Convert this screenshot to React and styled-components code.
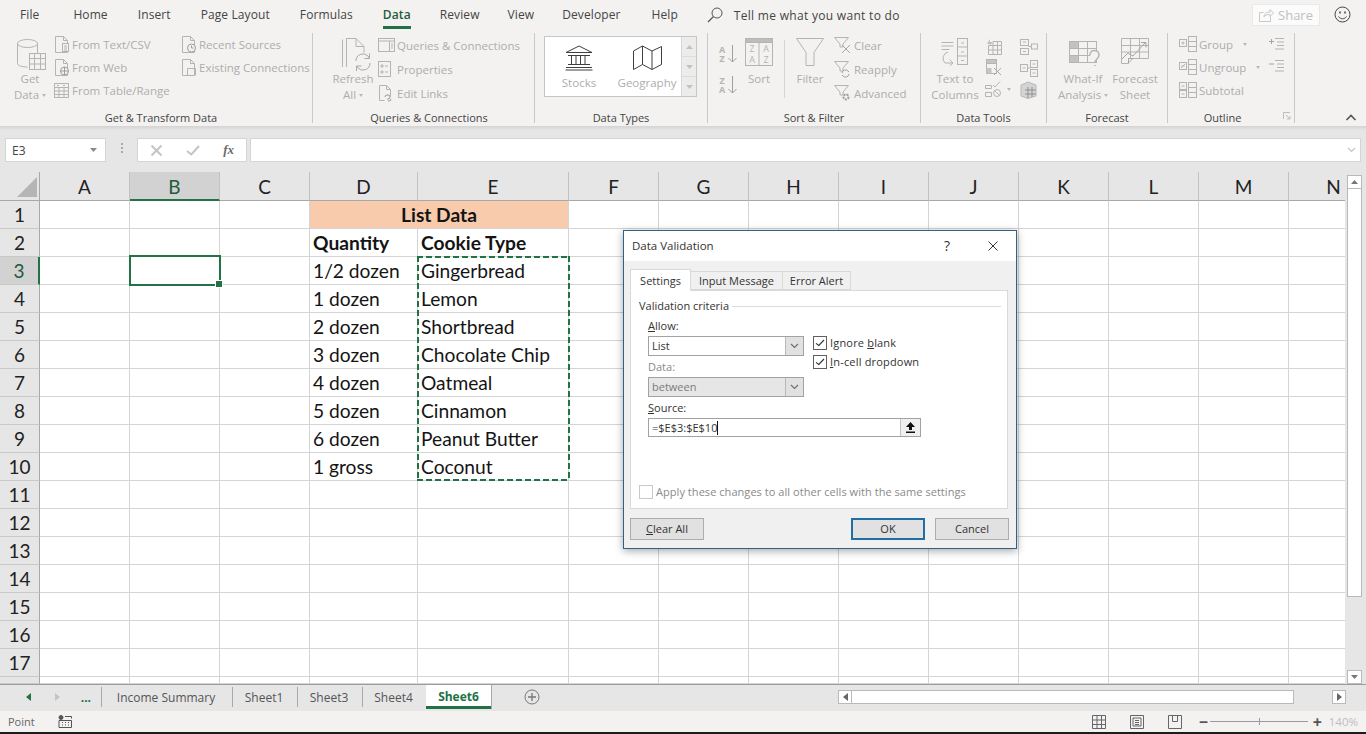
import React from 'react'
import styled, { createGlobalStyle } from 'styled-components'

const GlobalStyle = createGlobalStyle`
  html, body { margin:0; padding:0; background:#e6e6e6; overflow:hidden; }
  body { font-family:"Open Sans","Noto Sans","Liberation Sans",sans-serif; font-size:12px; color:#444; }
  * { box-sizing:border-box; }
`
const GREEN = '#217346'
const DIM = '#adadad'
const LINE = '#b4b4b4'

const Page = styled.div`
  position:relative; width:1366px; height:734px; overflow:hidden;
  display:flex; flex-direction:column; background:#e6e6e6;
`
const Ico = styled.svg.attrs(p => ({ width: p.$w, height: p.$h, viewBox: `0 0 ${p.$w} ${p.$h}` }))`
  flex:none; display:block; fill:none; stroke:${p => p.$tone || LINE}; stroke-width:1;
  margin-left:${p => p.$ml || 0}px;
`

/* ---------- top tabs ---------- */
const TabRow = styled.div`
  height:32px; background:#f3f2f1; display:flex; align-items:flex-start; padding-left:20px; flex:none;
`
const TabItem = styled.div`
  height:28px; line-height:30px; margin-right:${p => p.$mr ?? 30}px; white-space:nowrap; font-size:12px; color:#444;
  letter-spacing:.1px;
  ${p => p.$active && `color:#1f5c3c; font-weight:600; border-bottom:3px solid ${GREEN}; height:29px;`}
`
const SearchHint = styled.div`
  display:flex; align-items:center; gap:11px; height:30px; margin-left:-1px; color:#444; letter-spacing:.3px;
`
const ShareBtn = styled.div`
  position:absolute; left:1252px; top:4px; width:68px; height:22px; background:#fbfbfb; border:1px solid #e9e9e9;
  display:flex; align-items:center; justify-content:center; gap:4px; color:#c0c0c0; font-size:13px;
`
const Smiley = styled.div` position:absolute; left:1334px; top:6px; `

/* ---------- ribbon ---------- */
const Ribbon = styled.div`
  height:94px; background:#f3f2f1; display:flex; align-items:flex-start; padding:1px 0 0 10px; flex:none;
`
const Group = styled.div`
  position:relative; width:${p => p.$w}px; height:90px; flex:none; display:flex; flex-direction:column;
  border-right:1px solid #c9c9c9;
`
const GroupBody = styled.div`
  height:75px; flex:none; display:flex; align-items:flex-start; padding-left:${p => p.$pl || 0}px;
`
const GroupLabel = styled.div`
  height:15px; flex:none; line-height:20px; text-align:center; color:#444; font-size:11px; white-space:nowrap;
  padding-left:${p => p.$pl || 0}px; padding-right:${p => p.$pr || 0}px;
`
const BigBtn = styled.div`
  width:${p => p.$w}px; margin-left:${p => p.$ml || 0}px; flex:none; display:flex; flex-direction:column; align-items:center;
  color:${DIM}; font-size:11.5px; line-height:16px; white-space:nowrap;
`
const IconSlot = styled.div`
  height:38px; padding-top:5px; display:flex; justify-content:center; margin-left:${p => p.$nudge || 0}px;
`
const Caret = styled.span`
  display:inline-block; width:0; height:0; margin-left:${p => p.$ml ?? 3}px; vertical-align:middle;
  border-left:2.5px solid transparent; border-right:2.5px solid transparent; border-top:3px solid ${p => p.$c || '#b8b8b8'};
`
const SmallCol = styled.div`
  margin-left:${p => p.$ml || 0}px; width:${p => (p.$w ? p.$w + 'px' : 'auto')}; flex:none;
  padding-top:${p => p.$pt ?? 0}px; display:flex; flex-direction:column;
`
const SmallRow = styled.div`
  height:${p => p.$h || 23}px; display:flex; align-items:center; gap:${p => p.$gap ?? 2}px; color:${DIM}; white-space:nowrap; font-size:11.5px;
`
const VRule = styled.div`
  width:1px; height:58px; margin:7px ${p => p.$r}px 0 ${p => p.$l}px; background:#d4d4d4; flex:none;
`
const Gallery = styled.div`
  width:153px; height:61px; margin-top:3px; display:flex; background:#fff; border:1px solid #c6c6c6; flex:none;
`
const GalleryItem = styled.div`
  width:${p => p.$w}px; display:flex; flex-direction:column; align-items:center; padding-top:8px; gap:4px; color:${DIM}; font-size:11.5px; line-height:15px;
`
const GalleryScroll = styled.div`
  margin-left:auto; width:15px; display:flex; flex-direction:column; border-left:1px solid #d8d8d8; background:#ececec;
`
const GalleryStep = styled.div`
  flex:1; display:flex; align-items:center; justify-content:center; border-bottom:${p => (p.$last ? 'none' : '1px solid #dcdcdc')};
`
const SortKey = styled.div`
  height:31px; display:flex; align-items:center; gap:1px;
`
const SortLetters = styled.div`
  width:10px; font-size:9px; line-height:9px; font-weight:700; color:#b4b4b4; text-align:center;
  & > span { display:block; height:9px; }
`
const Launcher = styled.div` position:absolute; right:3px; bottom:3px; `
const Collapse = styled.div` position:absolute; left:1345px; top:114px; `

/* ---------- formula bar ---------- */
const RibbonFoot = styled.div`
  height:4px; flex:none; background:linear-gradient(#d3d3d3,#e6e6e6);
`
const FormulaRow = styled.div`
  height:42px; flex:none; display:flex; align-items:flex-start; padding:8px 5px 0; background:#e6e6e6;
`
const NameBox = styled.div`
  width:101px; height:24px; background:#fff; border:1px solid #d4d4d4; display:flex; align-items:center; justify-content:space-between;
  padding:0 8px 0 6px; font-size:12px; color:#444;
`
const Grip = styled.div`
  width:31px; display:flex; flex-direction:column; align-items:center; gap:2px; padding-top:5px; flex:none;
  & > i { width:2px; height:2px; background:#aaa; }
`
const FxBox = styled.div`
  width:110px; height:24px; background:#fff; border:1px solid #d4d4d4; display:flex; align-items:center; justify-content:space-between;
  padding:0 12px; flex:none; margin-right:3px;
`
const FxMark = styled.span`
  font-family:"Liberation Serif",serif; font-style:italic; font-weight:700; font-size:13px; color:#6a6a6a;
`
const FormulaInput = styled.div`
  flex:1; height:24px; background:#fff; border:1px solid #d4d4d4; display:flex; align-items:center; justify-content:flex-end; padding-right:4px;
`

/* ---------- sheet ---------- */
const SheetWrap = styled.div`
  height:512px; flex:none; display:flex; background:#e6e6e6;
`
const Grid = styled.div`
  width:1345px; height:512px; flex:none; display:grid; overflow:hidden; background:#fff;
  grid-template-columns:40px 90px 90px 90px 108px 151px repeat(9,90px);
  grid-template-rows:29px repeat(17,28px) 7px;
  font-family:Lato,"Liberation Sans",sans-serif;
`
const Corner = styled.div`
  grid-column:1; grid-row:1; background:#e6e6e6; border-right:1px solid #a8a8a8; border-bottom:1px solid #a8a8a8; position:relative;
  &::after { content:""; position:absolute; left:17px; top:5px; width:20px; height:20px; background:#b5b5b5; clip-path:polygon(100% 0,100% 100%,0 100%); }
`
const ColHead = styled.div`
  grid-column:${p => p.$c}; grid-row:1; display:flex; align-items:center; justify-content:center; padding-top:1px;
  font-size:19px; color:${p => (p.$on ? '#1f5c3c' : '#222')}; background:${p => (p.$on ? '#d2d2d2' : '#e6e6e6')};
  border-right:1px solid #c2c2c2; border-bottom:${p => (p.$on ? `2px solid ${GREEN}` : '1px solid #a8a8a8')};
`
const RowHead = styled.div`
  grid-column:1; grid-row:${p => p.$r}; display:flex; align-items:center; justify-content:center; overflow:hidden;
  font-size:19px; color:${p => (p.$on ? '#1f5c3c' : '#222')}; background:${p => (p.$on ? '#d2d2d2' : '#e6e6e6')};
  border-right:${p => (p.$on ? `2px solid ${GREEN}` : '1px solid #a8a8a8')}; border-bottom:1px solid #c9c9c9;
`
const Cell = styled.div`
  grid-column:${p => p.$c} / span ${p => p.$span || 1}; grid-row:${p => p.$r};
  border-right:1px solid #d4d4d4; border-bottom:1px solid #d4d4d4; padding:0 3px; display:flex; align-items:center;
  justify-content:${p => (p.$center ? 'center' : 'flex-start')}; font-size:19.2px; color:#141414; white-space:nowrap; overflow:hidden;
  font-weight:${p => (p.$bold ? 700 : 400)}; background:${p => p.$fill || '#fff'};
`
const Selected = styled.div`
  grid-column:3; grid-row:4; margin:-2px -1px -1px -1px; border:2px solid ${GREEN}; position:relative; z-index:2;
  &::after { content:""; position:absolute; right:-4px; bottom:-4px; width:6px; height:6px; background:${GREEN}; border:1px solid #fff; }
`
const Ants = styled.div`
  grid-column:6; grid-row:4 / 12; margin:-1px -1px 0 -1px; z-index:2; pointer-events:none;
  background:
    linear-gradient(90deg,${GREEN} 6px,transparent 6px) left top / 9px 2px repeat-x,
    linear-gradient(90deg,${GREEN} 6px,transparent 6px) left bottom / 9px 2px repeat-x,
    linear-gradient(${GREEN} 6px,transparent 6px) left top / 2px 9px repeat-y,
    linear-gradient(${GREEN} 6px,transparent 6px) right top / 2px 9px repeat-y;
`
const VScroll = styled.div`
  flex:1; display:flex; flex-direction:column; padding:3px 3px 0 2px; background:#e6e6e6;
`
const ScrollBtn = styled.div`
  width:15px; height:14px; flex:none; background:#fff; border:1px solid #b9b9b9; display:flex; align-items:center; justify-content:center;
`
const VThumb = styled.div`
  width:15px; height:408px; flex:none; background:#fff; border:1px solid #b9b9b9; border-top:none;
`
const VTrack = styled.div` flex:1; `

/* ---------- sheet tabs ---------- */
const SheetBar = styled.div`
  height:27px; flex:none; display:flex; align-items:flex-start; background:#e6e6e6; border-top:1px solid #9c9c9c;
`
const Nav = styled.div`
  width:${p => p.$w}px; height:24px; flex:none; display:flex; align-items:center; color:${GREEN}; font-weight:700;
  justify-content:${p => (p.$end ? 'flex-end' : 'center')}; padding-right:${p => (p.$end ? 10 : 0)}px;
`
const SheetTab = styled.div`
  width:${p => p.$w}px; height:20px; margin-top:2px; padding-right:2px; flex:none; display:flex; align-items:center; justify-content:center; font-size:12px; color:#555;
  border-left:1px solid #a8a8a8;
  ${p => p.$active && `
    height:24px; margin-top:0; padding:1px 0 0; background:#fff; color:${GREEN}; font-weight:700; border-left:none; border-bottom:3px solid ${GREEN};
    box-shadow:1px 0 0 #a8a8a8;
  `}
`
const AddSheet = styled.div` margin:4px 0 0 33px; width:16px; flex:none; `
const HScroll = styled.div`
  margin:5px 0 0 298px; display:flex; align-items:stretch; height:14px; flex:none;
`
const HBtn = styled(ScrollBtn)` width:14px; `
const HThumb = styled.div` width:442px; background:#fff; border:1px solid #b9b9b9; border-left:none; `
const HTrack = styled.div` width:38px; `

/* ---------- status ---------- */
const StatusBar = styled.div`
  height:21px; flex:none; background:#f3f2f1; display:flex; align-items:center; padding-left:8px; color:#666; font-size:11px;
`
const StatusRight = styled.div`
  margin-left:auto; display:flex; align-items:center; padding-right:8px;
`
const ViewBtn = styled.div` margin-right:${p => p.$mr}px; display:flex; `
const Zoom = styled.div`
  display:flex; align-items:center; color:#bdbdbd; font-size:11.5px; gap:5px;
`
const ZoomTrack = styled.div`
  position:relative; width:98px; height:1px; background:#9a9a9a;
  &::after { content:""; position:absolute; left:49px; top:-3px; width:1px; height:7px; background:#9a9a9a; }
`
const ZoomMark = styled.span`
  font-size:16px; line-height:16px; font-weight:700; color:#555; width:${p => p.$w || 9}px; text-align:center;
`
const Percent = styled.span` margin-left:2px; `
const BlackEdge = styled.div` height:2px; flex:none; background:#1c1c1c; `

/* ---------- dialog ---------- */
const Dialog = styled.div`
  position:absolute; left:623px; top:230px; width:394px; height:319px; z-index:5; background:#f0f0f0;
  border:1px solid #2e6288; box-shadow:0 2px 8px rgba(0,0,0,.35); display:flex; flex-direction:column;
  font-size:11px; color:#333;
`
const Lift = styled.span` margin-bottom:2px; white-space:nowrap; `
const TitleBar = styled.div`
  height:30px; flex:none; background:#fff; display:flex; align-items:center; padding-left:8px; font-size:11.5px; color:#333;
`
const Help = styled.span` margin-left:auto; font-size:14px; margin-right:37px; margin-bottom:2px; `
const CloseX = styled.div` margin-right:17px; display:flex; `
const DlgBody = styled.div`
  flex:1; display:flex; flex-direction:column; padding:8px 7px 0 6px;
`
const DlgTabs = styled.div` display:flex; height:21px; align-items:flex-end; flex:none; `
const DlgTab = styled.div`
  width:${p => p.$w}px; height:${p => (p.$active ? 22 : 19)}px; display:flex; align-items:center; justify-content:center; flex:none;
  background:${p => (p.$active ? '#fff' : '#f0f0f0')}; border:1px solid #d9d9d9; margin-left:${p => (p.$active ? 0 : -1)}px;
  border-bottom:${p => (p.$active ? '1px solid #fff' : '1px solid #d9d9d9')}; position:relative; z-index:${p => (p.$active ? 2 : 1)};
  margin-bottom:${p => (p.$active ? -1 : 0)}px;
`
const Panel = styled.div`
  width:378px; height:219px; flex:none; background:#fff; border:1px solid #d9d9d9; display:flex; flex-direction:column; padding:8px 0 9px;
`
const Legend = styled.div`
  display:flex; align-items:center; gap:3px; padding:0 6px 0 8px; height:14px; flex:none;
  &::after { content:""; flex:1; height:1px; background:#dcdcdc; }
`
const Fields = styled.div` padding-left:17px; display:flex; flex-direction:column; flex:1; `
const FieldLabel = styled.div`
  height:14px; line-height:14px; margin-top:${p => p.$mt}px; color:${p => (p.$off ? '#8a8a8a' : '#333')}; flex:none;
`
const FieldRow = styled.div` display:flex; height:20px; margin-top:3px; gap:9px; flex:none; `
const Select = styled.div`
  width:156px; height:20px; flex:none; display:flex; align-items:center; justify-content:space-between; padding-left:3px;
  border:1px solid #a2a2a2; background:${p => (p.$off ? '#e6e6e6' : '#fff')}; color:${p => (p.$off ? '#7c7c7c' : '#333')};
`
const SelectBtn = styled.div`
  width:18px; height:18px; background:#e1e1e1; border-left:1px solid #b8b8b8; display:flex; align-items:center; justify-content:center;
`
const Checks = styled.div` display:flex; flex-direction:column; gap:5px; `
const CheckRow = styled.div`
  display:flex; align-items:center; gap:3px; height:14px; color:${p => (p.$off ? '#8a8a8a' : '#333')}; white-space:nowrap;
  letter-spacing:${p => (p.$off ? '.05px' : '.18px')};
`
const CheckBox = styled.div`
  width:14px; height:14px; flex:none; background:#fff; border:1px solid ${p => (p.$off ? '#c9c9c9' : '#5f5f5f')}; display:flex; align-items:center; justify-content:center;
`
const SourceBox = styled.div`
  width:273px; height:19px; margin-top:3px; flex:none; display:flex; align-items:center; padding-left:3px; border:1px solid #a2a2a2; background:#fff;
`
const CaretLine = styled.span` width:1px; height:14px; background:#111; flex:none; `
const RefBtn = styled.div`
  margin-left:auto; width:20px; height:17px; background:#f0f0f0; border-left:1px solid #c2c2c2; display:flex; align-items:center; justify-content:center;
`
const ApplyWrap = styled.div` margin-top:auto; padding-left:8px; flex:none; `
const BtnRow = styled.div` display:flex; margin-top:9px; gap:10px; flex:none; `
const DlgBtn = styled.div`
  width:74px; height:22px; flex:none; display:flex; align-items:center; justify-content:center; background:#e1e1e1; color:#333;
  border:${p => (p.$primary ? '2px solid #1f6ea5' : '1px solid #adadad')};
  margin-left:${p => (p.$push ? 'auto' : 0)};
`

/* ---------- icons ---------- */
const fold = 'M1.5.5h8l4 4v12h-12zM9.5.5v4h4'
const GetDataIcon = () => (
  <Ico $w={32} $h={34}>
    <ellipse cx="11.5" cy="5.5" rx="10" ry="4" />
    <path d="M1.5 5.5v20c0 2 4 3.5 10 3.5M21.5 5.5v10" />
    <rect x="13.5" y="15.5" width="16" height="16" fill="#f3f2f1" />
    <path d="M13.5 20.5h16M13.5 26h16M18.5 15.5v16M24.5 15.5v16" />
  </Ico>
)
const DocText = () => (
  <Ico $w={16} $h={17}><path d={fold} /><rect x="8.5" y="7.5" width="6" height="8" fill="#f3f2f1" /><path d="M10 10h3M10 12h3M10 14h3" /></Ico>
)
const DocWeb = () => (
  <Ico $w={16} $h={17}><path d={fold} /><circle cx="10.5" cy="12" r="4" fill="#f3f2f1" stroke="#9e9e9e" /><path d="M6.5 12h8M10.5 8v8" stroke="#9e9e9e" /></Ico>
)
const TableIco = () => (
  <Ico $w={16} $h={16}><rect x=".5" y=".5" width="14" height="14" /><path d="M.5 4.5h14M.5 8h14M.5 11.5h14M5 4.5v10M10 4.5v10" /><path d="M3 2.5h2M9 2.5h2" /></Ico>
)
const DocClock = () => (
  <Ico $w={16} $h={17}><path d={fold} /><circle cx="10.5" cy="12" r="4" fill="#f3f2f1" stroke="#9e9e9e" /><path d="M10.5 9.5V12h2" stroke="#9e9e9e" /></Ico>
)
const DocPair = () => (
  <Ico $w={16} $h={17}><path d={fold} /><path d="M6.5 16.5v-7h8v7" /></Ico>
)
const RefreshIcon = () => (
  <Ico $w={31} $h={33}>
    <path d="M.5 29V1.5M4.5 29V.5H14l8 8v6M14 .5v8h8" />
    <path d="M14 23a7 7 0 0 1 12-5l1.5 2M28 25a7 7 0 0 1-12 5l-1.5-2M27.5 15.5v5h-5M14.5 33v-5h5" stroke="#a8a8a8" />
  </Ico>
)
const QueriesIco = () => (
  <Ico $w={18} $h={15}><rect x=".5" y=".5" width="16" height="13" /><path d="M.5 3h16M11.5 3v10.5M13 6h2M13 8h2M13 10h2" /></Ico>
)
const PropsIco = () => (
  <Ico $w={14} $h={17}><rect x=".5" y=".5" width="12" height="15" /><path d="M3 4h2v2H3zM3 10h2v2H3zM7 5h3M7 11h3" /></Ico>
)
const LinksIco = () => (
  <Ico $w={15} $h={17}><path d="M1.5.5h7l4 4v7M8.5.5v4h4M1.5.5v15h5" /><path d="M7 12a2 2 0 0 1 2-2h1a2 2 0 0 1 0 4H9M13 14a2 2 0 0 1-2 2h-1" stroke="#999" /></Ico>
)
const BankIcon = () => (
  <Ico $w={28} $h={26} $tone="#3f3f3f">
    <path d="M1 7.5 14 1l13 6.5zM3 10.5h22M3 19.5h22M1 22.5h26M.5 25h27" />
    <path d="M6.5 10.5v9M11 10.5v9M15.5 10.5v9M20 10.5v9" />
  </Ico>
)
const MapIcon = () => (
  <Ico $w={29} $h={26} $tone="#3f3f3f">
    <path d="M.5 6 9.5 1l9.5 5 9.5-4.5V19.5L19 24.5 9.5 19.5.5 24.5zM9.5 1v18.5M19 6v18.5" />
  </Ico>
)
const Tri = ({ down, c = '#b4b4b4', w = 7, h = 4 }) => (
  <Ico $w={w} $h={h} $tone="none"><path fill={c} d={down ? `M0 0h${w}L${w / 2} ${h}z` : `M0 ${h}h${w}L${w / 2} 0z`} /></Ico>
)
const DownArrow = () => (
  <Ico $w={9} $h={18} $tone="#9e9e9e"><path d="M4.5 0v17M.5 13l4 4 4-4" /></Ico>
)
const SortGlyph = styled.text`
  font-size:9px; font-family:"Open Sans",sans-serif; fill:#b4b4b4; stroke:none; text-anchor:middle;
`
const SortIcon = () => (
  <Ico $w={28} $h={29}>
    <rect x=".5" y=".5" width="27" height="27" />
    <rect x=".5" y=".5" width="27" height="4" fill="#bdbdbd" />
    <path d="M14 4.5v23" />
    <SortGlyph x="7" y="14">Z</SortGlyph>
    <SortGlyph x="21" y="14">A</SortGlyph>
    <SortGlyph x="7" y="25">A</SortGlyph>
    <SortGlyph x="21" y="25">Z</SortGlyph>
  </Ico>
)
const FunnelBig = () => (
  <Ico $w={28} $h={28}><path d="M.5.5h27L18 14.5v13h-8v-13zM3 .5h22" /></Ico>
)
const funnelSmall = 'M.5.5h14L9 7v3H6V7z'
const FunnelClear = () => (
  <Ico $w={18} $h={17}><path d={funnelSmall} /><path d="M8 8l8 8M16 8l-8 8" stroke="#a8a8a8" /></Ico>
)
const FunnelReapply = () => (
  <Ico $w={18} $h={17}><path d={funnelSmall} /><path d="M8 12a3.5 3.5 0 0 1 6-2l1 1M15 13a3.5 3.5 0 0 1-6 2l-1-1" stroke="#a0a0a0" /></Ico>
)
const FunnelAdv = () => (
  <Ico $w={18} $h={17}><path d={funnelSmall} /><circle cx="12" cy="12" r="2.5" stroke="#a0a0a0" strokeWidth="2" strokeDasharray="2 1" /></Ico>
)
const TextColsIcon = () => (
  <Ico $w={28} $h={28}>
    <path d="M.5 4.5h12M.5 8h12M.5 11.5h8" />
    <rect x="16.5" y=".5" width="10" height="26" />
    <path d="M16.5 9h10M16.5 18h10M20 5h3M20 14h3M20 22.5h3" />
    <path d="M7 14a6.5 6.5 0 0 0-3 11h8M8.5 21.5l3.5 3.5-3.5 3" />
  </Ico>
)
const FlashIco = () => (
  <Ico $w={17} $h={16}><path d="M3.5 6.5h13v9h-13zM3.5 11h13M8 2.5v13M12.5 2.5v13M8 2.5h8.5v4" /><path d="M5 0 2 5h3L3 9l5-6H5z" fill="#c0c0c0" stroke="none" /></Ico>
)
const DupIco = () => (
  <Ico $w={17} $h={18}><rect x="1.5" y=".5" width="10" height="14" /><rect x="1.5" y=".5" width="10" height="4" fill="#c4c4c4" /><rect x="1.5" y="9" width="5" height="5.5" fill="#c4c4c4" stroke="none" /><path d="M9 9l7 7M16 9l-7 7" stroke="#a8a8a8" /></Ico>
)
const ValidateIco = () => (
  <Ico $w={17} $h={17}><path d="M.5 4.5h6v3h-6zM.5 11.5h6v4h-6zM8 4l2 2 5-5.5" /><circle cx="12" cy="12" r="3.5" /><path d="M9.5 9.5l5 5" /></Ico>
)
const ConsolIco = () => (
  <Ico $w={18} $h={16}><rect x=".5" y=".5" width="8" height="6" /><rect x=".5" y="9.5" width="8" height="6" /><rect x="11.5" y="5" width="6" height="5" /><path d="M8.5 7.5h3M3 3h3M3 12.5h3" /></Ico>
)
const RelIco = () => (
  <Ico $w={18} $h={17}><rect x=".5" y="4.5" width="7" height="7" /><rect x="10.5" y=".5" width="7" height="7" /><rect x="10.5" y="9.5" width="7" height="7" /><path d="M7.5 8h3M2.5 8h3M12.5 4h3M12.5 13h3" /></Ico>
)
const ModelIco = () => (
  <Ico $w={17} $h={18} $tone="#b9b9b9"><path d="M1 4 8 1l8 3v11l-8 2.5L1 15z" fill="#d4d4d4" /><path d="M8 6v11M12 6v10M5 9h11M5 13h11" stroke="#8f8f8f" /></Ico>
)
const WhatIfIcon = () => (
  <Ico $w={32} $h={28}>
    <rect x=".5" y="3.5" width="27" height="21" fill="#f3f2f1" />
    <rect x=".5" y="3.5" width="9" height="7" fill="#c2c2c2" />
    <rect x=".5" y="17.5" width="9" height="7" fill="#c2c2c2" />
    <path d="M.5 10.5h27M.5 17.5h27M9.5 3.5v21M18.5 3.5v21" />
    <path d="M21 17c0-6 9-6 9 0 0 4-4 3.5-4 8M26 27v1" strokeWidth="1.5" fill="#f3f2f1" />
  </Ico>
)
const ForecastIcon = () => (
  <Ico $w={29} $h={27}>
    <path d="M.5 .5h27v20H12l-5 5H.5z" />
    <path d="M.5 7.5h27M.5 14h27M9.5.5v20M18.5.5v20" />
    <path d="M1 21l6-6 5 3 12-13M20 4.5h5v5M7.5 25.5V20.5h5" stroke="#a4a4a4" />
  </Ico>
)
const OutlineIco = ({ kind }) => (
  <Ico $w={18} $h={17}>
    <rect x=".5" y="3.5" width="7" height="7" />
    <rect x="9.5" y=".5" width="8" height="15" />
    <path d="M9.5 5.5h8M9.5 10.5h8" />
    {kind === 'group' && <path d="M2.5 7h3M4 5.5v3" />}
    {kind === 'ungroup' && <path d="M2.5 7h3M2 9l4-4" />}
  </Ico>
)
const SubtotalIco = () => (
  <Ico $w={18} $h={17}>
    <rect x=".5" y=".5" width="7" height="7" /><rect x=".5" y="8.5" width="7" height="7" />
    <rect x="9.5" y=".5" width="8" height="15" /><path d="M9.5 5.5h8M9.5 10.5h8M2.5 4h3M2.5 12h3" />
  </Ico>
)
const OutlineRows = ({ plus }) => (
  <Ico $w={17} $h={14}>
    <path d="M7 1.5h9M9 5h7M9 8.5h7M7 12h9" />
    <path d={plus ? 'M1 4.5h5M3.5 2v5' : 'M1 5h5'} stroke="#a4a4a4" />
  </Ico>
)
const Cross = ({ s = 13, c = '#c4c4c4', sw = 2 }) => (
  <Ico $w={s} $h={s} $tone={c}><path d={`M1.5 1.5 ${s - 1.5} ${s - 1.5}M${s - 1.5} 1.5 1.5 ${s - 1.5}`} strokeWidth={sw} /></Ico>
)
const Tick = ({ w = 14, h = 11, c = '#c4c4c4', sw = 2 }) => (
  <Ico $w={w} $h={h} $tone={c}><path d={`M1 ${h * 0.55} ${w * 0.38} ${h - 1.5} ${w - 1} 1`} strokeWidth={sw} /></Ico>
)
const Chev = ({ c = '#6f6f6f' }) => (
  <Ico $w={9} $h={6} $tone={c}><path d="M1 1l3.5 3.5L8 1" strokeWidth="1.2" /></Ico>
)

const leftTabs = [['File', 34], ['Home'], ['Insert'], ['Page Layout'], ['Formulas'], ['Data', 29, true], ['Review', 28], ['View', 28], ['Developer', 31], ['Help', 30]]
const colNames = ['A','B','C','D','E','F','G','H','I','J','K','L','M','N']
const sheetRows = {
  2: ['Quantity', 'Cookie Type'],
  3: ['1/2 dozen', 'Gingerbread'],
  4: ['1 dozen', 'Lemon'],
  5: ['2 dozen', 'Shortbread'],
  6: ['3 dozen', 'Chocolate Chip'],
  7: ['4 dozen', 'Oatmeal'],
  8: ['5 dozen', 'Cinnamon'],
  9: ['6 dozen', 'Peanut Butter'],
  10: ['1 gross', 'Coconut'],
}

function Sheet() {
  const out = []
  for (let r = 1; r <= 18; r++) {
    out.push(<RowHead key={'h' + r} $r={r + 1} $on={r === 3}>{r < 18 ? r : null}</RowHead>)
    for (let c = 0; c < 14; c++) {
      const gridCol = c + 2
      const key = r + '-' + c
      if (r === 1 && c === 3) {
        out.push(<Cell key={key} $c={gridCol} $r={2} $span={2} $center $bold $fill="#f8cbad">List Data</Cell>)
      } else if (r === 1 && c === 4) {
        continue
      } else {
        const row = sheetRows[r]
        const text = row && (c === 3 ? row[0] : c === 4 ? row[1] : null)
        out.push(<Cell key={key} $c={gridCol} $r={r + 1} $bold={r === 2}>{text}</Cell>)
      }
    }
  }
  return (
    <Grid>
      <Corner />
      {colNames.map((n, i) => <ColHead key={n} $c={i + 2} $on={n === 'B'}>{n}</ColHead>)}
      {out}
      <Selected />
      <Ants />
    </Grid>
  )
}

function RibbonBar() {
  return (
    <Ribbon>
      <Group $w={303}>
        <GroupBody $pl={3}>
          <BigBtn $w={34}>
            <IconSlot $nudge={3}><GetDataIcon /></IconSlot>
            <div>Get</div><div>Data<Caret /></div>
          </BigBtn>
          <SmallCol $ml={7} $w={127}>
            <SmallRow><DocText />From Text/CSV</SmallRow>
            <SmallRow><DocWeb />From Web</SmallRow>
            <SmallRow><TableIco />From Table/Range</SmallRow>
          </SmallCol>
          <SmallCol>
            <SmallRow><DocClock />Recent Sources</SmallRow>
            <SmallRow><DocPair />Existing Connections</SmallRow>
          </SmallCol>
        </GroupBody>
        <GroupLabel>Get &amp; Transform Data</GroupLabel>
      </Group>
      <Group $w={222}>
        <GroupBody $pl={20}>
          <BigBtn $w={40}>
            <IconSlot $nudge={9}><RefreshIcon /></IconSlot>
            <div>Refresh</div><div>All<Caret /></div>
          </BigBtn>
          <SmallCol $ml={5}>
            <SmallRow $h={24} $gap={1}><QueriesIco />Queries &amp; Connections</SmallRow>
            <SmallRow $h={24} $gap={5}><PropsIco />Properties</SmallRow>
            <SmallRow $h={24} $gap={4}><LinksIco />Edit Links</SmallRow>
          </SmallCol>
        </GroupBody>
        <GroupLabel $pl={11}>Queries &amp; Connections</GroupLabel>
      </Group>
      <Group $w={173}>
        <GroupBody $pl={9}>
          <Gallery>
            <GalleryItem $w={68}><BankIcon />Stocks</GalleryItem>
            <GalleryItem $w={68}><MapIcon />Geography</GalleryItem>
            <GalleryScroll>
              <GalleryStep><Tri c="#c2c2c2" /></GalleryStep>
              <GalleryStep><Tri down c="#c2c2c2" /></GalleryStep>
              <GalleryStep $last><Tri down c="#c2c2c2" /></GalleryStep>
            </GalleryScroll>
          </Gallery>
        </GroupBody>
        <GroupLabel>Data Types</GroupLabel>
      </Group>
      <Group $w={213}>
        <GroupBody $pl={9}>
          <SmallCol $pt={5}>
            <SortKey><SortLetters><span>A</span><span>Z</span></SortLetters><DownArrow /></SortKey>
            <SortKey><SortLetters><span>Z</span><span>A</span></SortLetters><DownArrow /></SortKey>
          </SmallCol>
          <BigBtn $w={30} $ml={7}>
            <IconSlot><SortIcon /></IconSlot>
            <div>Sort</div>
          </BigBtn>
          <VRule $l={10} $r={10} />
          <BigBtn $w={30}>
            <IconSlot><FunnelBig /></IconSlot>
            <div>Filter</div>
          </BigBtn>
          <SmallCol $ml={9}>
            <SmallRow $h={24}><FunnelClear />Clear</SmallRow>
            <SmallRow $h={24}><FunnelReapply />Reapply</SmallRow>
            <SmallRow $h={24}><FunnelAdv />Advanced</SmallRow>
          </SmallCol>
        </GroupBody>
        <GroupLabel>Sort &amp; Filter</GroupLabel>
      </Group>
      <Group $w={126}>
        <GroupBody $pl={9}>
          <BigBtn $w={50}>
            <IconSlot><TextColsIcon /></IconSlot>
            <div>Text to</div><div>Columns</div>
          </BigBtn>
          <SmallCol $ml={5} $pt={3} $w={35}>
            <SmallRow $h={21}><FlashIco /></SmallRow>
            <SmallRow $h={22}><DupIco /></SmallRow>
            <SmallRow $h={21} $gap={5}><ValidateIco /><Caret $ml={0} /></SmallRow>
          </SmallCol>
          <SmallCol $pt={3}>
            <SmallRow $h={21}><ConsolIco /></SmallRow>
            <SmallRow $h={22}><RelIco /></SmallRow>
            <SmallRow $h={21}><ModelIco /></SmallRow>
          </SmallCol>
        </GroupBody>
        <GroupLabel>Data Tools</GroupLabel>
      </Group>
      <Group $w={121}>
        <GroupBody $pl={9}>
          <BigBtn $w={54}>
            <IconSlot $nudge={4}><WhatIfIcon /></IconSlot>
            <div>What-If</div><div>Analysis<Caret /></div>
          </BigBtn>
          <BigBtn $w={50}>
            <IconSlot><ForecastIcon /></IconSlot>
            <div>Forecast</div><div>Sheet</div>
          </BigBtn>
        </GroupBody>
        <GroupLabel>Forecast</GroupLabel>
      </Group>
      <Group $w={127}>
        <GroupBody $pl={11}>
          <SmallCol $w={89}>
            <SmallRow><OutlineIco kind="group" />Group<Caret $ml={8} /></SmallRow>
            <SmallRow><OutlineIco kind="ungroup" />Ungroup<Caret $ml={8} /></SmallRow>
            <SmallRow><SubtotalIco />Subtotal</SmallRow>
          </SmallCol>
          <SmallCol>
            <SmallRow $h={22}><OutlineRows plus /></SmallRow>
            <SmallRow $h={22}><OutlineRows /></SmallRow>
          </SmallCol>
        </GroupBody>
        <GroupLabel $pr={17}>Outline</GroupLabel>
        <Launcher>
          <Ico $w={8} $h={8} $tone="#bdbdbd"><path d="M.5 7V.5H7M3 3l4 4M7 4v3H4" /></Ico>
        </Launcher>
      </Group>
    </Ribbon>
  )
}

export default function App() {
  return (
    <Page>
      <GlobalStyle />
      <TabRow>
        {leftTabs.map(([name, mr, active]) => (
          <TabItem key={name} $mr={mr} $active={active}>{name}</TabItem>
        ))}
        <SearchHint>
          <Ico $w={16} $h={16} $tone="#555">
            <circle cx="10" cy="6" r="5" />
            <path d="M6.5 9.5 1 15" strokeWidth="1.3" />
          </Ico>
          Tell me what you want to do
        </SearchHint>
      </TabRow>
      <ShareBtn>
        <Ico $w={15} $h={14} $tone="#c8c8c8"><path d="M.5 4.5h4M.5 4.5v9h11v-5M5 9c0-4 3-5 6-5V1.5l3.5 3.5L11 8.5V6.5C8 6.5 6 7 5 9z" /></Ico>
        Share
      </ShareBtn>
      <Smiley>
        <Ico $w={17} $h={17} $tone="#444">
          <circle cx="8.5" cy="8.5" r="7.5" />
          <path d="M4.5 10.5c2 3 6 3 8 0" />
          <path d="M6 5.5v2M11 5.5v2" strokeWidth="1.5" />
        </Ico>
      </Smiley>
      <RibbonBar />
      <Collapse>
        <Ico $w={12} $h={7} $tone="#555"><path d="M1.5 6 6 1.5 10.5 6" strokeWidth="1.6" /></Ico>
      </Collapse>
      <RibbonFoot />
      <FormulaRow>
        <NameBox>E3<Tri down c="#8a8a8a" /></NameBox>
        <Grip><i /><i /><i /></Grip>
        <FxBox>
          <Cross />
          <Tick />
          <FxMark>fx</FxMark>
        </FxBox>
        <FormulaInput><Chev c="#c4c4c4" /></FormulaInput>
      </FormulaRow>
      <SheetWrap>
        <Sheet />
        <VScroll>
          <ScrollBtn><Tri c="#777" /></ScrollBtn>
          <VThumb />
          <VTrack />
          <ScrollBtn><Tri down c="#777" /></ScrollBtn>
        </VScroll>
      </SheetWrap>
      <SheetBar>
        <Nav $w={58}><Ico $w={6} $h={8} $tone="none"><path fill={GREEN} d="M5 0v8L0 4z" /></Ico></Nav>
        <Nav $w={0}><Ico $w={6} $h={8} $tone="none"><path fill="#c4c4c4" d="M0 0v8l5-4z" /></Ico></Nav>
        <Nav $w={43} $end>...</Nav>
        <SheetTab $w={131}>Income Summary</SheetTab>
        <SheetTab $w={65}>Sheet1</SheetTab>
        <SheetTab $w={65}>Sheet3</SheetTab>
        <SheetTab $w={64}>Sheet4</SheetTab>
        <SheetTab $w={65} $active>Sheet6</SheetTab>
        <AddSheet>
          <Ico $w={16} $h={16} $tone="#777"><circle cx="8" cy="8" r="7" /><path d="M8 4v8M4 8h8" strokeWidth="1.3" /></Ico>
        </AddSheet>
        <HScroll>
          <HBtn><Ico $w={5} $h={8} $tone="none"><path fill="#666" d="M5 0v8L0 4z" /></Ico></HBtn>
          <HThumb />
          <HTrack />
          <HBtn><Ico $w={5} $h={8} $tone="none"><path fill="#666" d="M0 0v8l5-4z" /></Ico></HBtn>
        </HScroll>
      </SheetBar>
      <StatusBar>
        Point
        <Ico $w={14} $h={13} $tone="#555" $ml={23}>
          <circle cx="3" cy="2.5" r="2" fill="#555" />
          <path d="M7 1.5h6.5v2M1 5.5h12.5v7H1zM4 7.5h1M7 7.5h1M10 7.5h1M4 10h1M7 10h1M10 10h1" />
        </Ico>
        <StatusRight>
          <ViewBtn $mr={24}>
            <Ico $w={14} $h={14} $tone="#666"><path d="M.5.5h13v13H.5zM5 .5v13M9.5 .5v13M.5 5h13M.5 9.5h13" /></Ico>
          </ViewBtn>
          <ViewBtn $mr={24}>
            <Ico $w={14} $h={14} $tone="#666"><path d="M.5.5h13v13H.5zM3 3h8v8H3zM5 5.5h4M5 7.5h4M5 9.5h4" /></Ico>
          </ViewBtn>
          <ViewBtn $mr={17}>
            <Ico $w={14} $h={14} $tone="#666"><path d="M.5.5h13v13H.5zM4.5 .5v6h5v-6" /></Ico>
          </ViewBtn>
          <Zoom>
            <ZoomMark $w={6}>−</ZoomMark>
            <ZoomTrack />
            <ZoomMark>+</ZoomMark>
            <Percent>140%</Percent>
          </Zoom>
        </StatusRight>
      </StatusBar>
      <BlackEdge />

      <Dialog>
        <TitleBar>
          <Lift>Data Validation</Lift>
          <Help>?</Help>
          <CloseX><Cross s={12} c="#333" sw={1} /></CloseX>
        </TitleBar>
        <DlgBody>
          <DlgTabs>
            <DlgTab $w={61} $active>Settings</DlgTab>
            <DlgTab $w={93}>Input Message</DlgTab>
            <DlgTab $w={69}>Error Alert</DlgTab>
          </DlgTabs>
          <Panel>
            <Legend><Lift>Validation criteria</Lift></Legend>
            <Fields>
              <FieldLabel $mt={6}><u>A</u>llow:</FieldLabel>
              <FieldRow>
                <Select><Lift>List</Lift><SelectBtn><Chev /></SelectBtn></Select>
                <Checks>
                  <CheckRow><CheckBox><Tick w={10} h={8} c="#333" sw={1.1} /></CheckBox><Lift>Ignore <u>b</u>lank</Lift></CheckRow>
                  <CheckRow><CheckBox><Tick w={10} h={8} c="#333" sw={1.1} /></CheckBox><Lift><u>I</u>n-cell dropdown</Lift></CheckRow>
                </Checks>
              </FieldRow>
              <FieldLabel $mt={4} $off>Data:</FieldLabel>
              <FieldRow>
                <Select $off><Lift>between</Lift><SelectBtn><Chev /></SelectBtn></Select>
              </FieldRow>
              <FieldLabel $mt={4}><u>S</u>ource:</FieldLabel>
              <SourceBox>
                =$E$3:$E$10<CaretLine />
                <RefBtn>
                  <Ico $w={9} $h={11} $tone="none"><path fill="#111" d="M4.5 0 9 5H6v3H3V5H0zM0 9.5h9V11H0z" /></Ico>
                </RefBtn>
              </SourceBox>
            </Fields>
            <ApplyWrap>
              <CheckRow $off><CheckBox $off /><Lift>Apply these changes to all other cells with the same settings</Lift></CheckRow>
            </ApplyWrap>
          </Panel>
          <BtnRow>
            <DlgBtn><Lift><u>C</u>lear All</Lift></DlgBtn>
            <DlgBtn $primary $push><Lift>OK</Lift></DlgBtn>
            <DlgBtn><Lift>Cancel</Lift></DlgBtn>
          </BtnRow>
        </DlgBody>
      </Dialog>
    </Page>
  )
}
